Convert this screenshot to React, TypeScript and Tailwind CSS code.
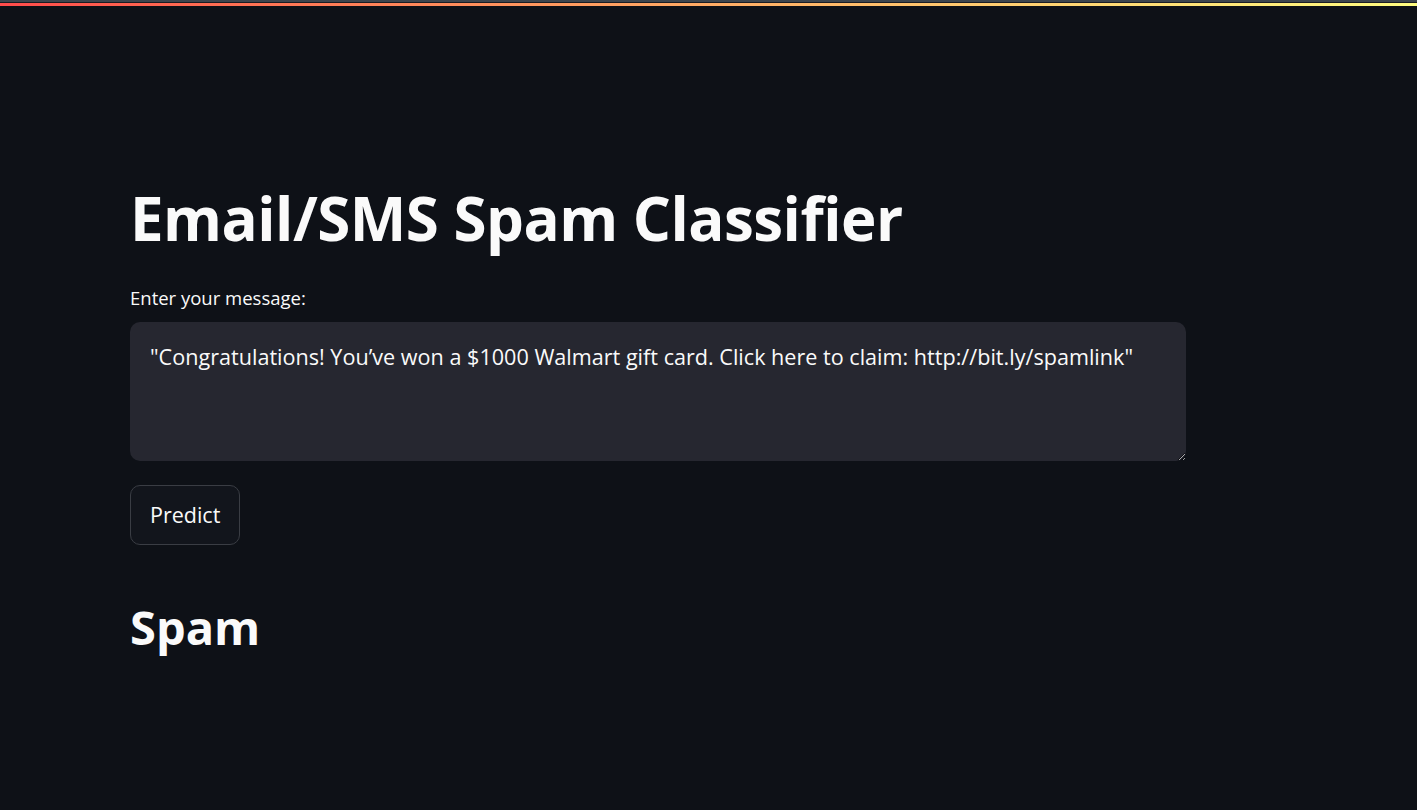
import React from "react";

export default function App() {
  const font = { fontFamily: '"Open Sans", "Noto Sans", sans-serif' };
  return (
    <div className="min-h-[810px] w-full bg-[#0e1117] text-[#fafafa]" style={font}>
      <div className="h-[2px] bg-[#3d454d]" />
      <div className="h-[1px] bg-[#1a1d24]" />
      <div className="h-[3px] bg-gradient-to-r from-[#ff4b4b] to-[#fffd80]" />
      <main className="pl-[130px] pr-[231px] pt-[172px]">
        <h1 className="text-[60px] font-bold leading-[80px] tracking-[-0.5px]">Email/SMS Spam Classifier</h1>
        <label className="mt-[30px] block text-[18.5px] leading-[20px]">Enter your message:</label>
        <textarea
          className="mt-[14px] block h-[139px] w-full resize-y rounded-[10px] bg-[#262730] px-[20px] pb-[13px] pt-[19px] text-[21.6px] leading-[32px] text-[#fafafa] outline-none"
          defaultValue={'"Congratulations! You\u2019ve won a $1000 Walmart gift card. Click here to claim: http://bit.ly/spamlink"'}
        />
        <button className="mt-[24px] flex h-[60px] items-center rounded-[10px] border border-[#3a3d44] bg-[#12151c] px-[19px] text-[21.5px]">
          Predict
        </button>
        <h2 className="mt-[52px] text-[47px] font-bold leading-[60px]">Spam</h2>
      </main>
    </div>
  );
}
